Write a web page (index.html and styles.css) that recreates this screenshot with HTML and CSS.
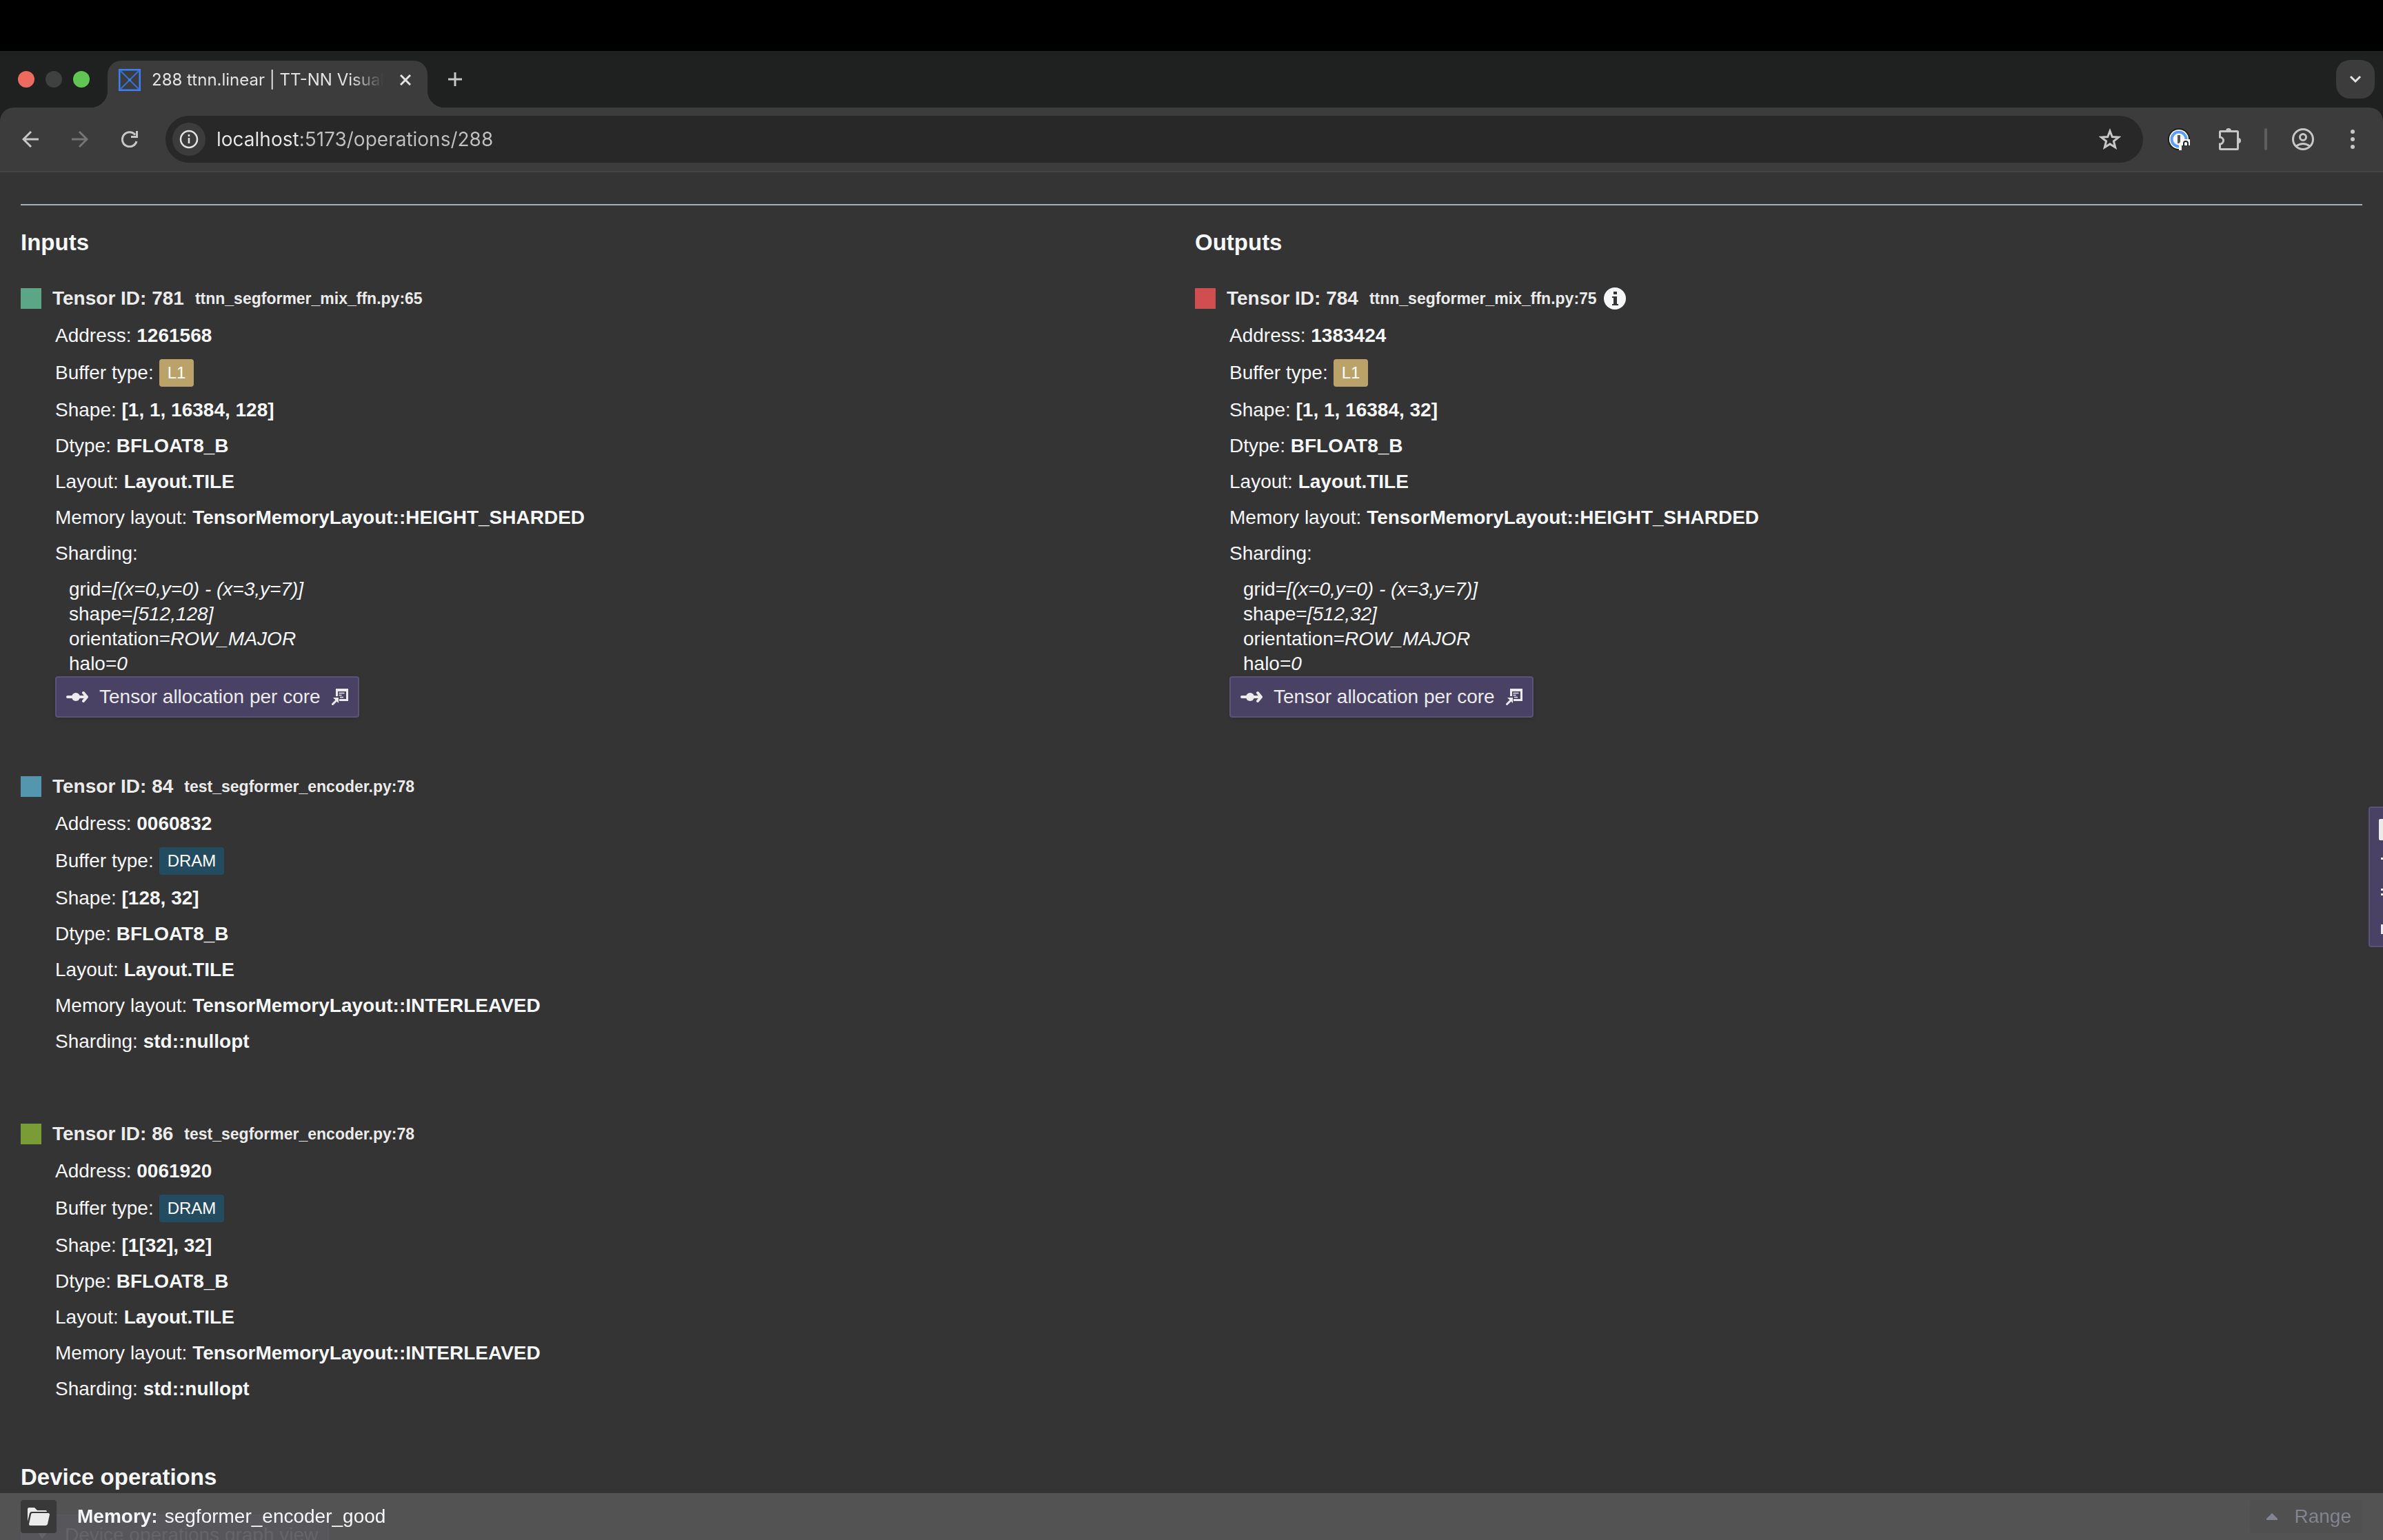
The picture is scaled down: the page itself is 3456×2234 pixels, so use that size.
FILE: index.html
```html
<!DOCTYPE html>
<html lang="en">
<head>
  <meta charset="UTF-8" />
  <meta name="viewport" content="width=device-width, initial-scale=1.0"/>
  <title>288 ttnn.linear | TT-NN Visualizer</title>
  <link rel="stylesheet" href="styles.css">
</head>
<body>
  <svg class="sprite" aria-hidden="true">
    <symbol id="icon-flow" viewBox="0 0 32 32">
      <path d="M2 16H29M25 10l5 6-5 6" fill="none" stroke="currentColor" stroke-width="4" stroke-linecap="round" stroke-linejoin="round"/>
      <circle cx="14" cy="16" r="6" fill="currentColor"/>
    </symbol>
    <symbol id="icon-open" viewBox="0 0 24 24">
      <path d="M6 0h18v18H11v-3h10V4H9v7H6z" fill="currentColor"/>
      <path d="M10.500 6.500h8M10.500 9.500h4M12 12.500h5" stroke="currentColor" stroke-width="1.500" fill="none"/>
      <path d="M1.500 22.500l6-6" stroke="currentColor" stroke-width="3" stroke-linecap="round"/>
      <path d="M2 13h8v8l-4-4z" fill="currentColor"/>
    </symbol>
  </svg>

  <div class="menu-bar"></div>

  <header class="browser">
    <div class="tab-strip">
      <div class="window-controls">
        <span class="dot close"></span>
        <span class="dot minimise"></span>
        <span class="dot zoom"></span>
      </div>
      <div class="tab">
        <svg class="favicon" viewBox="0 0 32 32">
          <rect x="1" y="1" width="30" height="30" fill="none" stroke="#3b82f6" stroke-width="3"/>
          <path d="M3 3l26 26M29 3L3 29" stroke="#356fd0" stroke-width="2"/>
          <circle cx="16" cy="16" r="2" fill="#3b82f6"/>
        </svg>
        <span class="tab-title">288 ttnn.linear | TT-NN Visualizer</span>
        <button class="tab-close" aria-label="Close tab">
          <svg width="16" height="16" viewBox="0 0 16 16"><path d="M1 1l14 14M15 1L1 15" stroke="currentColor" stroke-width="3"/></svg>
        </button>
      </div>
      <button class="tab-new" aria-label="New tab">
        <svg width="20" height="20" viewBox="0 0 20 20"><path d="M10 0v20M0 10h20" stroke="currentColor" stroke-width="3"/></svg>
      </button>
      <button class="tab-search" aria-label="Search tabs">
        <svg width="18" height="12" viewBox="0 0 18 12"><path d="M2 2l7 7 7-7" fill="none" stroke="currentColor" stroke-width="3"/></svg>
      </button>
    </div>

    <div class="toolbar">
      <button class="tool" aria-label="Back">
        <svg width="24" height="24" viewBox="0 0 24 24"><path d="M24 12H2M13 1L2 12l11 11" fill="none" stroke="currentColor" stroke-width="3"/></svg>
      </button>
      <button class="tool" aria-label="Forward" disabled>
        <svg width="24" height="24" viewBox="0 0 24 24"><path d="M0 12h22M11 1l11 11-11 11" fill="none" stroke="currentColor" stroke-width="3"/></svg>
      </button>
      <button class="tool" aria-label="Reload">
        <svg width="24" height="24" viewBox="0 0 24 24">
          <path d="M22 15A10.500 10.500 0 1 1 20 5.500" fill="none" stroke="currentColor" stroke-width="3"/>
          <path d="M24 0v10H14V7h7V0z" fill="currentColor"/>
        </svg>
      </button>
      <div class="omnibox">
        <button class="site-info" aria-label="View site information">
          <svg width="28" height="28" viewBox="0 0 28 28">
            <circle cx="14" cy="14" r="12" fill="none" stroke="currentColor" stroke-width="2.500"/>
            <path d="M14 12v8M14 7v3" stroke="currentColor" stroke-width="2.500"/>
          </svg>
        </button>
        <input class="url" type="text" value="localhost:5173/operations/288" aria-label="Address" spellcheck="false">
        <button class="bookmark" aria-label="Bookmark this tab">
          <svg width="32" height="32" viewBox="0 0 32 32"><path d="M16 4l3.300 8.500 9.200.6-7.100 5.800 2.300 8.900-7.700-4.900-7.700 4.900 2.300-8.900L3.500 13.100l9.200-.6z" fill="none" stroke="currentColor" stroke-width="3"/></svg>
        </button>
      </div>
      <button class="extension" aria-label="Password manager">
        <svg width="32" height="32" viewBox="0 0 32 32">
          <circle cx="16" cy="16" r="16" fill="#1c1c1c"/>
          <circle cx="16" cy="16" r="14" fill="#fff"/>
          <circle cx="16" cy="16" r="10.500" fill="#f6f6f6" stroke="#5c9df5" stroke-width="4"/>
          <path d="M14 10h4v12h-4z" fill="#555"/>
          <path d="M16 22l6-6h10v16H16z" fill="#fff"/>
          <path d="M20 25h12v7H20z" fill="#3c3c3c"/>
          <path d="M23 26v-4a3 3 0 0 1 6 0v4" fill="none" stroke="#222" stroke-width="2"/>
        </svg>
      </button>
      <button class="extension" aria-label="Extensions">
        <svg width="32" height="32" viewBox="0 0 32 32">
          <path d="M2 5h25q1 0 1 1v24q0 1-1 1H3q-1 0-1-1v-6.500a5 5 0 0 0 0-10V6q0-1 1-1z" transform="translate(-.5 -.5)" fill="none" stroke="currentColor" stroke-width="3"/>
          <path d="M10 4a4 4 0 0 1 8 0zM28 14a4 4 0 0 1 0 8z" fill="currentColor"/>
        </svg>
      </button>
      <span class="separator"></span>
      <button class="extension" aria-label="Profile">
        <svg width="32" height="32" viewBox="0 0 32 32" fill="none" stroke="currentColor" stroke-width="3">
          <circle cx="16" cy="16" r="14.500"/>
          <circle cx="16" cy="13" r="4.500"/>
          <path d="M6 26q10-7 20 0"/>
        </svg>
      </button>
      <button class="extension kebab" aria-label="Menu">
        <svg width="32" height="32" viewBox="0 0 32 32" fill="currentColor">
          <circle cx="16" cy="5" r="3"/><circle cx="16" cy="16" r="3"/><circle cx="16" cy="27" r="3"/>
        </svg>
      </button>
    </div>
  </header>

  <main class="page">
    <hr>
    <div class="columns">
      <section>
        <h3>Inputs</h3>

        <article class="tensor">
          <h4><span class="swatch green"></span>Tensor ID: 781 <small>ttnn_segformer_mix_ffn.py:65</small></h4>
          <div class="details">
            <p>Address: <b>1261568</b></p>
            <p class="buffer">Buffer type: <span class="tag l1">L1</span></p>
            <p>Shape: <b>[1, 1, 16384, 128]</b></p>
            <p>Dtype: <b>BFLOAT8_B</b></p>
            <p>Layout: <b>Layout.TILE</b></p>
            <p>Memory layout: <b>TensorMemoryLayout::HEIGHT_SHARDED</b></p>
            <p>Sharding:</p>
            <ul class="sharding">
              <li>grid=<i>[(x=0,y=0) - (x=3,y=7)]</i></li>
              <li>shape=<i>[512,128]</i></li>
              <li>orientation=<i>ROW_MAJOR</i></li>
              <li>halo=<i>0</i></li>
            </ul>
            <button class="allocation">
              <svg width="32" height="32"><use href="#icon-flow"/></svg>
              Tensor allocation per core
              <svg width="24" height="24"><use href="#icon-open"/></svg>
            </button>
          </div>
        </article>

        <article class="tensor">
          <h4><span class="swatch blue"></span>Tensor ID: 84 <small>test_segformer_encoder.py:78</small></h4>
          <div class="details">
            <p>Address: <b>0060832</b></p>
            <p class="buffer">Buffer type: <span class="tag dram">DRAM</span></p>
            <p>Shape: <b>[128, 32]</b></p>
            <p>Dtype: <b>BFLOAT8_B</b></p>
            <p>Layout: <b>Layout.TILE</b></p>
            <p>Memory layout: <b>TensorMemoryLayout::INTERLEAVED</b></p>
            <p>Sharding: <b>std::nullopt</b></p>
          </div>
        </article>

        <article class="tensor">
          <h4><span class="swatch olive"></span>Tensor ID: 86 <small>test_segformer_encoder.py:78</small></h4>
          <div class="details">
            <p>Address: <b>0061920</b></p>
            <p class="buffer">Buffer type: <span class="tag dram">DRAM</span></p>
            <p>Shape: <b>[1[32], 32]</b></p>
            <p>Dtype: <b>BFLOAT8_B</b></p>
            <p>Layout: <b>Layout.TILE</b></p>
            <p>Memory layout: <b>TensorMemoryLayout::INTERLEAVED</b></p>
            <p>Sharding: <b>std::nullopt</b></p>
          </div>
        </article>
      </section>

      <section>
        <h3>Outputs</h3>

        <article class="tensor">
          <h4>
            <span class="swatch red"></span>Tensor ID: 784 <small>ttnn_segformer_mix_ffn.py:75</small>
            <svg class="info" width="32" height="32" viewBox="0 0 32 32">
              <circle cx="16" cy="16" r="16" fill="#f6f7f9"/>
              <path d="M14 6h5v4h-5zM12 13h7v11h2v2h-9v-2h2v-9h-2z" fill="#343434"/>
            </svg>
          </h4>
          <div class="details">
            <p>Address: <b>1383424</b></p>
            <p class="buffer">Buffer type: <span class="tag l1">L1</span></p>
            <p>Shape: <b>[1, 1, 16384, 32]</b></p>
            <p>Dtype: <b>BFLOAT8_B</b></p>
            <p>Layout: <b>Layout.TILE</b></p>
            <p>Memory layout: <b>TensorMemoryLayout::HEIGHT_SHARDED</b></p>
            <p>Sharding:</p>
            <ul class="sharding">
              <li>grid=<i>[(x=0,y=0) - (x=3,y=7)]</i></li>
              <li>shape=<i>[512,32]</i></li>
              <li>orientation=<i>ROW_MAJOR</i></li>
              <li>halo=<i>0</i></li>
            </ul>
            <button class="allocation">
              <svg width="32" height="32"><use href="#icon-flow"/></svg>
              Tensor allocation per core
              <svg width="24" height="24"><use href="#icon-open"/></svg>
            </button>
          </div>
        </article>
      </section>
    </div>

    <h3 class="device-heading">Device operations</h3>
    <button class="allocation graph-view" disabled>
      <svg width="32" height="32" viewBox="0 0 32 32" fill="currentColor"><path d="M9 4h12l-2 10-5 6-5-8z"/><path d="M14 20l12-14" stroke="currentColor" stroke-width="3"/></svg>
      Device operations graph view
    </button>
  </main>

  <aside class="side-panel">
    <svg width="32" height="200" viewBox="0 0 32 200" fill="#ebebeb">
      <rect x="13" y="16" width="30" height="31" rx="2"/>
      <path d="M16 72h16v3H16zM16 117h16v3H16zM16 124h16v3H16zM16 169h3v11h13v3H16z"/>
    </svg>
  </aside>

  <footer class="status-bar">
    <button class="folder" aria-label="Open report">
      <svg width="32" height="32" viewBox="0 0 32 32" fill="currentColor">
        <path d="M0 5q0-2 2-2h8l4 4h12q2 0 2 2H6q-2 0-3 2L0 23z"/>
        <path d="M7 11h23q2 0 2 2l-3 14q-1 2-3 2H4q-2 0-2-2l3-14q0-2 2-2z"/>
      </svg>
    </button>
    <span class="report"><b>Memory:</b> segformer_encoder_good</span>
    <button class="range" disabled>
      <svg width="16" height="10" viewBox="0 0 16 10"><path d="M8 0l8 8v2H0V8z" fill="currentColor"/></svg>
      Range
    </button>
  </footer>
</body>
</html>
```
FILE: styles.css
```css
:root {
  --page-bg: #343434;
  --text-color: #f6f7f9;
  --title-color: #ebebeb;
  --chrome-bg: #3c3c3c;
  --strip-bg: #1f2120;
  --purple: #494264;
  --purple-border: #5a5277;
}

* {
  box-sizing: border-box;
}

body {
  margin: 0;
  height: 100vh;
  overflow: hidden;
  display: flex;
  flex-direction: column;
  background: var(--page-bg);
  color: var(--text-color);
  font-family: Arial, "Liberation Sans", sans-serif;
  font-size: 28px;
  line-height: 36px;
}

button {
  display: flex;
  align-items: center;
  justify-content: center;
  flex-shrink: 0;
  margin: 0;
  padding: 0;
  border: none;
  background: none;
  color: inherit;
  font: inherit;
}

svg {
  display: block;
  flex-shrink: 0;
}

.sprite {
  display: none;
}

/* Browser window */
.menu-bar {
  flex: 0 0 74px;
  background: #000;
}

.browser {
  flex-shrink: 0;
  background: var(--strip-bg);
  font-family: Inter, sans-serif;
}

.tab-strip {
  display: flex;
  align-items: center;
  height: 82px;
  padding: 0 12px 0 26px;
}

.window-controls {
  display: flex;
  gap: 16px;
  margin-right: 26px;
}

.dot {
  width: 24px;
  height: 24px;
  border-radius: 50%;
}

.dot.close {
  background: #ed6a5e;
}

.dot.minimise {
  background: #3f4140;
}

.dot.zoom {
  background: #61c554;
}

.tab {
  position: relative;
  display: flex;
  align-items: flex-start;
  align-self: flex-end;
  width: 464px;
  height: 68px;
  padding: 12px 16px;
  background: var(--chrome-bg);
  border-radius: 20px 20px 0 0;
}

.tab::before,
.tab::after {
  content: "";
  position: absolute;
  bottom: 0;
  width: 24px;
  height: 24px;
}

.tab::before {
  right: 100%;
  background: radial-gradient(circle at 0 0, transparent 24px, var(--chrome-bg) 24px);
}

.tab::after {
  left: 100%;
  background: radial-gradient(circle at 100% 0, transparent 24px, var(--chrome-bg) 24px);
}

.favicon {
  width: 32px;
  height: 32px;
}

.tab-title {
  flex: 1;
  margin-left: 16px;
  overflow: hidden;
  white-space: nowrap;
  color: #e3e3e3;
  font-size: 24px;
  line-height: 32px;
  -webkit-mask-image: linear-gradient(90deg, #000 86%, transparent);
  mask-image: linear-gradient(90deg, #000 86%, transparent);
}

.tab-close {
  width: 32px;
  height: 32px;
  margin-left: 16px;
  color: #e3e3e3;
}

.tab-new {
  width: 40px;
  height: 40px;
  margin-left: 20px;
  color: #c7c7c7;
}

.tab-search {
  width: 56px;
  height: 56px;
  margin-left: auto;
  border-radius: 20px;
  background: var(--chrome-bg);
  color: #e3e3e3;
}

.toolbar {
  display: flex;
  align-items: center;
  height: 94px;
  padding: 0 28px 0 8px;
  background: var(--chrome-bg);
  border-bottom: 2px solid #454545;
  border-radius: 20px 20px 0 0;
  color: #c7c7c7;
}

.tool {
  width: 72px;
  height: 68px;
}

.tool:disabled {
  color: #757575;
}

.omnibox {
  flex: 1;
  display: flex;
  align-items: center;
  height: 68px;
  margin: 0 36px 0 16px;
  padding: 0 32px 0 10px;
  border-radius: 34px;
  background: #282828;
}

.site-info {
  width: 48px;
  height: 48px;
  border-radius: 50%;
  background: var(--chrome-bg);
  color: #e3e3e3;
}

.url {
  flex: 1;
  height: 40px;
  margin-left: 16px;
  padding: 0;
  border: none;
  outline: none;
  /* host is brighter than the path */
  background: linear-gradient(90deg, #e8e8e8 122px, #c0c0c0 122px);
  -webkit-background-clip: text;
  background-clip: text;
  color: transparent;
  font-family: inherit;
  font-size: 28px;
}

.extension {
  width: 32px;
  height: 32px;
  margin-right: 42px;
}

.separator {
  width: 4px;
  height: 32px;
  margin: 0 36px 0 -8px;
  border-radius: 2px;
  background: #5e5e5e;
}

.separator + .extension {
  margin-right: 40px;
}

.extension.kebab {
  margin-right: 0;
}

/* Operation details */
.page {
  flex: 1;
  min-height: 0;
  padding: 46px 30px 0;
}

hr {
  height: 2px;
  margin: 0 0 36px;
  border: none;
  background: #a7b0b8;
}

.columns {
  display: grid;
  grid-template-columns: 1fr 1fr;
  gap: 10px;
}

h3 {
  margin: 0 0 45px;
  font-size: 33px;
  line-height: 36px;
}

.tensor {
  margin-bottom: 82px;
}

h4 {
  display: flex;
  align-items: center;
  height: 36px;
  margin: 0 0 18px;
  color: var(--title-color);
  font-size: 28px;
}

h4 small {
  margin-left: 16px;
  font-size: 23px;
}

.swatch {
  width: 30px;
  height: 30px;
  margin-right: 16px;
}

.swatch.green {
  background: #5ca687;
}

.swatch.blue {
  background: #5396ae;
}

.swatch.olive {
  background: #7a9c36;
}

.swatch.red {
  background: #d04e50;
}

.info {
  margin-left: 10px;
}

.details {
  display: flow-root;
  padding-left: 50px;
}

.details p {
  margin: 0 0 16px;
}

.details .buffer {
  display: flex;
  align-items: center;
  gap: 8px;
  height: 40px;
}

.tag {
  padding: 2px 12px;
  border-radius: 4px;
  font-size: 24px;
  color: #fff;
}

.tag.l1 {
  background: #bba268;
}

.tag.dram {
  background: #244c60;
}

.sharding {
  margin: 0;
  padding: 0 0 0 20px;
  list-style: none;
}

.allocation {
  gap: 16px;
  height: 60px;
  padding: 0 14px;
  border: 2px solid var(--purple-border);
  border-radius: 4px;
  background: var(--purple);
  color: var(--title-color);
  box-shadow: 0 2px 4px rgba(0, 0, 0, 0.1);
}

.device-heading {
  margin: -6px 0 36px;
}

.graph-view {
  color: #a5a2b0;
}

/* Minimised panel, mostly off the right edge */
.side-panel {
  position: fixed;
  top: 1170px;
  right: -15px;
  height: 204px;
  border: 2px solid var(--purple-border);
  border-radius: 4px;
  background: var(--purple);
}

.status-bar {
  position: fixed;
  bottom: 0;
  left: 0;
  right: 0;
  display: flex;
  align-items: center;
  height: 68px;
  padding: 0 30px;
  background: rgba(89, 89, 89, 0.85);
}

.folder {
  width: 52px;
  height: 48px;
  border-radius: 4px;
  background: #393939;
  color: #ebebeb;
}

.report {
  display: flex;
  gap: 10px;
  margin-left: 30px;
}

.range {
  gap: 24px;
  height: 48px;
  margin-left: auto;
  padding: 0 16px 0 24px;
  border-radius: 4px;
  background: #505050;
  color: #82858f;
}
```
